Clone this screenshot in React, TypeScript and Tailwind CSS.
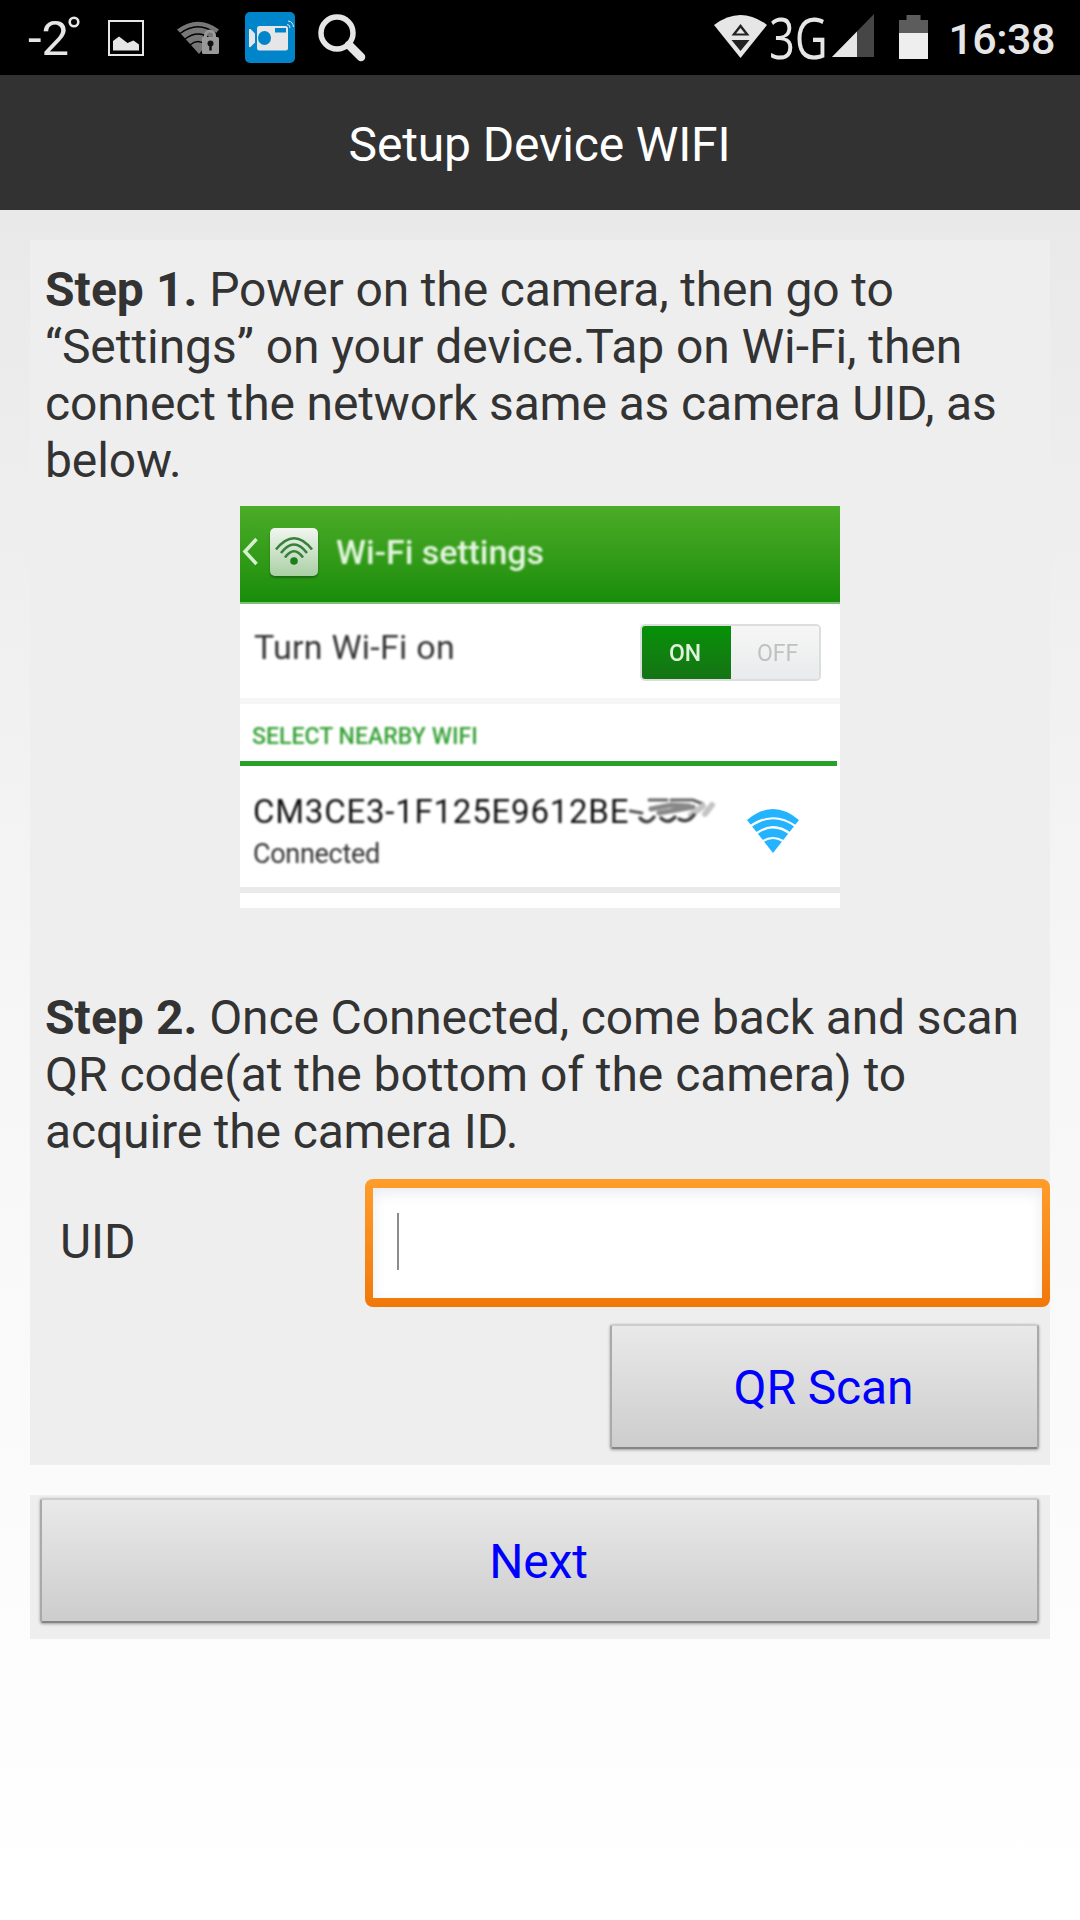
import type { ReactNode } from 'react';

const ImageIcon = () => (
  <svg className="h-9 w-9" viewBox="0 0 36 36" fill="none">
    <rect x="1" y="1" width="34" height="34" stroke="#e6e6e6" strokeWidth="2" />
    <path d="M5 30.500V21l6-4.500 8.500 6.500 6-2.500 5.500 4v6z" fill="#e6e6e6" />
  </svg>
);

const LockedWifiIcon = () => (
  <svg className="h-[34px] w-[43px]" viewBox="0 0 43 34" fill="none">
    <path d="M0 8.500Q21 -7 42 8.500L22 33z" fill="#777" />
    <path d="M3 12.500Q21 -1 39 12.500M8 18Q21 8 34 18M13 24Q21 17 29 24" stroke="#000" strokeWidth="1.500" />
    <path d="M28.500 18v-3.500a4.500 4.500 0 0 1 9 0V18" stroke="#999" strokeWidth="3" />
    <rect x="25" y="16" width="17" height="17" rx="1.500" fill="#999" />
    <circle cx="33.500" cy="22.500" r="3" fill="#111" />
    <path d="M33.500 22v7.500" stroke="#111" strokeWidth="2.500" />
  </svg>
);

const CameraAppIcon = () => (
  <svg className="h-[51px] w-[50px]" viewBox="0 0 50 51" fill="none">
    <rect width="50" height="51" rx="5" fill="#0085ca" />
    <path d="M4 17h1.500l4.500 4.500v9L5.500 35H4z" fill="#e6e6e6" />
    <rect x="12" y="14" width="31" height="24.500" rx="2.500" fill="#e6e6e6" />
    <ellipse cx="19.500" cy="26" rx="6.500" ry="7" fill="#0085ca" />
    <rect x="30" y="16" width="11" height="4.500" fill="#0085ca" />
    <path d="M42 12.500q3 0 3 3.500M43 9q5 .5 5.500 6" stroke="#e6e6e6" strokeWidth="1" />
  </svg>
);

const SearchIcon = () => (
  <svg className="h-12 w-12" viewBox="0 0 48 48" fill="none" stroke="#e6e6e6">
    <circle cx="19" cy="19" r="16" strokeWidth="5.500" />
    <path d="M31 31L43 43" strokeWidth="8.500" strokeLinecap="round" />
  </svg>
);

const DataWifiIcon = () => (
  <svg className="h-[43px] w-[53px]" viewBox="0 0 53 43" fill="none">
    <path d="M0 10Q26.500 -10 53 10L26.500 43z" fill="#e6e6e6" />
    <path d="M26.500 9L35.500 20.500h-18zM17.500 25h18l-9 11z" fill="#222" />
    <path d="M26.500 13L31 18.500h-9z" fill="#e6e6e6" />
  </svg>
);

const SignalIcon = () => (
  <svg className="h-[43px] w-[42px]" viewBox="0 0 42 43">
    <path d="M42 0v43H0z" fill="#464646" />
    <path d="M25 17.500V43H0z" fill="#e6e6e6" />
  </svg>
);

const BatteryIcon = () => (
  <svg className="h-11 w-[29px]" viewBox="0 0 29 44">
    <path d="M0 5h7.500V0h14v5H29v14H0z" fill="#5c5c5c" />
    <path d="M0 18h29v26H0z" fill="#eee" />
  </svg>
);

const StatusBar = () => (
  <div className="flex h-[75px] justify-between bg-black text-[#e6e6e6]">
    <div className="flex items-start pl-7">
      <div className="flex w-20 pt-[10px]">
        <span className="text-[49px] leading-[57px]">-2</span>
        <svg className="mt-[6px] -ml-px h-3 w-3" viewBox="0 0 12 12">
          <circle cx="6" cy="6" r="4.300" fill="none" stroke="#e6e6e6" strokeWidth="2.600" />
        </svg>
      </div>
      <div className="mt-5">
        <ImageIcon />
      </div>
      <div className="mt-[21px] ml-[33px]">
        <LockedWifiIcon />
      </div>
      <div className="mt-3 ml-[25px]">
        <CameraAppIcon />
      </div>
      <div className="mt-[14px] ml-[23px]">
        <SearchIcon />
      </div>
    </div>
    <div className="flex items-start pr-[25px]">
      <div className="mt-[15px]">
        <DataWifiIcon />
      </div>
      <span className="ml-[2px] h-[75px] w-[56px] origin-left scale-x-[0.810] font-['Open_Sans',sans-serif] text-[56px] leading-[75px]">
        3G
      </span>
      <div className="mt-[14px] ml-[7px]">
        <SignalIcon />
      </div>
      <div className="mt-[15px] ml-[25px]">
        <BatteryIcon />
      </div>
      <span className="ml-5 text-[43px] leading-[79px] font-medium tracking-[-0.500px]">16:38</span>
    </div>
  </div>
);

const WifiTile = () => (
  <svg className="h-12 w-12 rounded-[5px] bg-linear-to-b from-[#f2f6f0] to-[#a9cfa4] shadow-[0_2px_2px_#1b6b12]" viewBox="0 0 48 48" fill="none">
    <path d="M6 21.500Q24 -1 42 21.500M11 25Q24 8 37 25M15 29.500Q24 17 33 29.500" stroke="#39803a" strokeWidth="2.600" />
    <circle cx="24" cy="33" r="3.800" fill="#1c7d1c" />
  </svg>
);

const BlueWifiIcon = () => (
  <svg className="h-11 w-[52px]" viewBox="0 0 52 44" fill="none">
    <path d="M0 11Q26 -11 52 11L26 44z" fill="#24b4ff" />
    <path d="M3 17.500Q26 1 49 17.500M9 24.500Q26 12 43 24.500M16 32Q26 26 36 32" stroke="#fff" strokeWidth="2.200" />
  </svg>
);

// Smeared tail of the network name
const Smudge = () => (
  <svg className="mt-[5px] h-[30px] w-[88px] blur-[1.300px]" viewBox="0 0 88 30" fill="none" strokeLinecap="round">
    <path d="M1 14l12 2" stroke="#555" strokeWidth="3" />
    <path d="M20 3h18M42 3h22l10 4" stroke="#666" strokeWidth="3" />
    <path d="M22 12l20-4 18 1M30 16l34-6" stroke="#888" strokeWidth="5" />
    <path d="M62 18l12-9M76 17l7-9" stroke="#c4c4c4" strokeWidth="6" />
    <path d="M11 21q7 8 14-1M32 21q7 7 14-1M50 22q8 5 15-4" stroke="#444" strokeWidth="3.500" />
  </svg>
);

const WifiPreview = () => (
  <div className="mx-auto h-[402px] w-[600px] overflow-hidden bg-white tracking-normal">
    <div className="flex h-[98px] items-start border-b-2 border-[#7dc177] bg-linear-to-b from-[#4bac27] to-[#168d09] text-[#e5f6e0]">
      <svg className="mt-[30px] ml-[2px] h-8 w-4 blur-[0.600px]" viewBox="0 0 16 32" fill="none">
        <path d="M14.500 3L3 15.500 14.500 28" stroke="#d5efcf" strokeWidth="3.500" />
      </svg>
      <div className="mt-[22px] ml-3 blur-[0.600px]">
        <WifiTile />
      </div>
      <span className="mt-[26px] ml-[18px] text-[34px] leading-[40px] font-medium tracking-[-0.050px] blur-[0.900px]">Wi-Fi settings</span>
    </div>
    <div className="flex h-[100px] items-start justify-between border-b-[6px] border-[#f6f6f6] pr-[19px] pl-[14px]">
      <span className="mt-[23px] text-[34px] leading-[40px] tracking-[0.250px] text-[#333] blur-[0.900px]">Turn Wi-Fi on</span>
      <div className="mt-[20px] flex h-[57px] w-[181px] overflow-hidden rounded-[5px] border-2 border-[#dcdddd] text-[23px] leading-[58px] blur-[0.600px]">
        <span className="-my-px -ml-px w-[90px] bg-linear-to-b from-[#059205] to-[#147314] pl-[28px] font-medium text-[#dff2dc]">ON</span>
        <span className="flex-1 bg-linear-to-b from-[#f6f6f6] to-[#e9ebec] pl-[26px] leading-[56px] text-[#bfc1c1]">OFF</span>
      </div>
    </div>
    <div className="mr-[3px] h-[62px] border-b-[5px] border-[#29a029] pt-[18px] pl-3">
      <span className="block text-[23px] leading-[30px] font-medium tracking-[0.050px] text-[#35a135] blur-[0.900px]">SELECT NEARBY WIFI</span>
    </div>
    <div className="flex h-[127px] items-start border-b-[6px] border-[#eaeaea] pl-[13px]">
      <div className="w-[494px]">
        <div className="mt-[26px] flex h-[40px] items-start">
          <span className="text-[33px] leading-[40px] tracking-[0.780px] whitespace-nowrap text-[#111] blur-[0.900px]">CM3CE3-1F125E9612BE</span>
          <Smudge />
        </div>
        <span className="mt-[6px] block text-[27px] leading-[32px] tracking-[-0.300px] text-[#333] blur-[0.900px]">Connected</span>
      </div>
      <div className="mt-[43px] blur-[0.600px]">
        <BlueWifiIcon />
      </div>
    </div>
  </div>
);

const GreyButton = ({ className, children }: { className: string; children: ReactNode }) => (
  <button
    type="button"
    className={`h-[125px] rounded-[3px] border-2 border-t-[#cdcdcd] border-r-[#a9a9a9] border-b-[#858585] border-l-[#a9a9a9] bg-linear-to-b from-[#e9e9e9] to-[#cdcdcd] pt-px pr-[2px] text-[48px] leading-[57px] text-[#0000ff] shadow-[0_1px_3px_rgba(0,0,0,0.350)] ${className}`}
  >
    {children}
  </button>
);

const App = () => (
  <main className="flex h-[1920px] w-[1080px] flex-col overflow-hidden bg-white font-[Roboto,sans-serif] tracking-[-0.140px] text-[#333]">
    <StatusBar />
    <header className="flex h-[135px] items-center justify-center bg-[#323232] pt-1 pr-px">
      <h1 className="text-[48px] leading-[57px] text-white">Setup Device WIFI</h1>
    </header>
    <div className="flex flex-1 flex-col gap-[30px] bg-linear-to-b from-[#e9e9e9] via-[#f7f7f7] to-white px-[30px] pt-[30px]">
      <section className="h-[1225px] bg-[#eee] pt-[21px]">
        <p className="pl-[15px] text-[48px] leading-[57px]">
          <b className="tracking-[0.050px]">Step 1.</b> Power on the camera, then go to
          <br />
          <span className="tracking-[-0.060px]">“Settings” on your device.Tap on Wi-Fi, then</span>
          <br />
          connect the network same as camera UID, as
          <br />
          below.
        </p>
        <div className="mt-[17px]">
          <WifiPreview />
        </div>
        <p className="mt-[81px] pl-[15px] text-[48px] leading-[57px]">
          <b className="tracking-[0.050px]">Step 2.</b> Once Connected, come back and scan
          <br />
          <span className="tracking-[-0.040px]">QR code(at the bottom of the camera) to</span>
          <br />
          acquire the camera ID.
        </p>
        <div className="mt-[19px] flex items-center justify-between">
          <label className="pb-1 pl-[30px] text-[48px] leading-[57px]">UID</label>
          <div className="h-[128px] w-[685px] rounded-[8px] bg-linear-to-b from-[#ff9d2a] to-[#f07808] px-2 py-[9px]">
            <div className="flex h-[110px] items-center bg-white pb-[3px] pl-6 shadow-[inset_0_5px_14px_#e9ebed]">
              <div className="h-[57px] w-[2px] bg-[#8c8c8c]" />
            </div>
          </div>
        </div>
        <div className="mt-[17px] flex justify-end pr-[11px]">
          <GreyButton className="w-[429px]">QR Scan</GreyButton>
        </div>
      </section>
      <section className="h-[144px] bg-[#eee] px-[10px] pt-[3px]">
        <GreyButton className="w-[999px]">Next</GreyButton>
      </section>
    </div>
  </main>
);

export default App;
